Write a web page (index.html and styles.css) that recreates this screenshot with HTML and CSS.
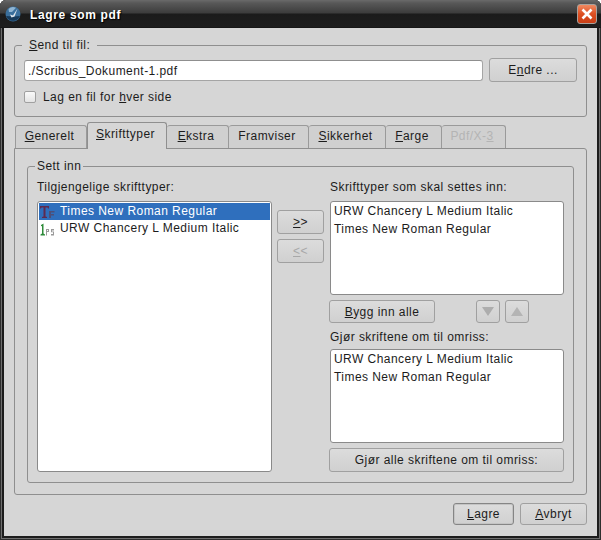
FILE: index.html
```html
<!DOCTYPE html>
<html lang="nb">
<head>
    <meta charset="UTF-8">
    <title>Lagre som pdf</title>
    <link rel="stylesheet" href="styles.css">
</head>
<body>
    <div class="window">
        <!-- tittellinje -->
        <div class="titlebar">
            <svg class="app-icon" width="16" height="16" viewBox="0 0 16 16">
                <circle cx="8" cy="8" r="7.5" fill="#3a6f9c"/>
                <path d="M1 10A7.5 7.5 0 0 0 15 10L9 10.5Z" fill="#173a5a"/>
                <path d="M3.5 3A6.5 6.5 0 0 1 11 1.8L7 6L4 6Z" fill="#8fb4d2"/>
                <path d="M12.5 2.5L8 9.5L5 8.5L6.5 11.5L9.5 10.5Z" fill="#dfe6ec"/>
            </svg>
            <span class="title">Lagre som pdf</span>
            <div class="close">
                <svg width="14" height="14" viewBox="0 0 14 14"><path d="M2.5 2.5L11.5 11.5M11.5 2.5L2.5 11.5" stroke="#fff" stroke-width="2.6"/></svg>
            </div>
        </div>

        <div class="body">
            <!-- fil -->
            <fieldset class="group file-group">
                <legend><u>S</u>end til fil:</legend>
                <div class="file-row">
                    <div class="input">./Scribus_Dokument-1.pdf</div>
                    <div class="btn btn-change">E<u>n</u>dre ...</div>
                </div>
                <div class="check-row">
                    <span class="checkbox"></span>
                    <span>Lag en fil for <u>h</u>ver side</span>
                </div>
            </fieldset>

            <!-- faner -->
            <div class="tabs">
                <div class="tab tab-1"><u>G</u>enerelt</div>
                <div class="tab tab-2 active"><u>S</u>krifttyper</div>
                <div class="tab tab-3"><u>E</u>kstra</div>
                <div class="tab tab-4">Framviser</div>
                <div class="tab tab-5"><u>S</u>ikkerhet</div>
                <div class="tab tab-6"><u>F</u>arge</div>
                <div class="tab tab-7 disabled">Pdf/X-<u>3</u></div>
            </div>

            <div class="panel">
                <fieldset class="group embed-group">
                    <legend>Sett inn</legend>
                    <div class="columns">
                        <div class="col-left">
                            <div class="label">Tilgjengelige skrifttyper:</div>
                            <div class="list list-fonts">
                                <div class="item selected">
                                    <svg class="font-icon" width="18" height="14" viewBox="0 0 18 14">
                                        <path d="M1 1H10V3.5H9L8.5 2.5H6.5V11.5L8 12V13H3V12L4.5 11.5V2.5H2.5L2 3.5H1Z" fill="#5e2a50"/>
                                        <path d="M10 6H15.5V7.5H12V9H15V10.5H12V13H10Z" fill="#4d4f78"/>
                                    </svg>
                                    <span>Times New Roman Regular</span>
                                </div>
                                <div class="item">
                                    <svg class="font-icon" width="18" height="14" viewBox="0 0 18 14">
                                        <path d="M2 3L4.5 1.5V11.5L6 12.5V13.5H1.5V12.5L3 11.5V4L2 4.2Z" fill="#2e8b3a"/>
                                        <path d="M7 7H10V10H8V13.5H7ZM8 8V9H9V8ZM15 7H12V10.3H14V12H12V13.5H15V9.5H13V8.5H15Z" fill="#9a9a9a"/>
                                    </svg>
                                    <span>URW Chancery L Medium Italic</span>
                                </div>
                            </div>
                        </div>

                        <div class="col-mid">
                            <div class="btn btn-move"><u>&gt;</u>&gt;</div>
                            <div class="btn btn-move disabled"><u>&lt;</u>&lt;</div>
                        </div>

                        <div class="col-right">
                            <div class="label">Skrifttyper som skal settes inn:</div>
                            <div class="list list-small">
                                <div class="item">URW Chancery L Medium Italic</div>
                                <div class="item">Times New Roman Regular</div>
                            </div>
                            <div class="btn-row">
                                <div class="btn btn-embed"><u>B</u>ygg inn alle</div>
                                <div class="arrows">
                                    <div class="btn btn-arrow"><span class="tri tri-down"></span></div>
                                    <div class="btn btn-arrow"><span class="tri tri-up"></span></div>
                                </div>
                            </div>
                            <div class="label label-outline">Gjør skriftene om til omriss:</div>
                            <div class="list list-small">
                                <div class="item">URW Chancery L Medium Italic</div>
                                <div class="item">Times New Roman Regular</div>
                            </div>
                            <div class="btn btn-wide">Gjør alle skriftene om til omriss:</div>
                        </div>
                    </div>
                </fieldset>
            </div>

            <div class="footer">
                <div class="btn btn-save default"><u>L</u>agre</div>
                <div class="btn btn-cancel"><u>A</u>vbryt</div>
            </div>
        </div>
    </div>
</body>
</html>
```
FILE: styles.css
```css
/* grunnstil */
html, body {
    margin: 0;
    padding: 0;
}

body {
    width: 601px;
    height: 540px;
    overflow: hidden;
    background-color: #fff;
    font-family: "Liberation Sans", Arial, sans-serif;
    font-size: 12px;
    letter-spacing: 0.45px;
    color: #1c1c1c;
}

u {
    text-underline-offset: 1px;
}

.window {
    width: 601px;
    height: 540px;
    box-sizing: border-box;
    display: flex;
    flex-direction: column;
    background-color: #1c1c1c;
    box-shadow: inset 0 0 0 1px #2e2e2e, inset 0 0 0 2px #6e6e6e;
    border-radius: 6px 6px 0 0;
    overflow: hidden;
}

/* tittellinje */
.titlebar {
    height: 28px;
    flex: none;
    display: flex;
    align-items: center;
    padding: 0 4px 0 5px;
    background: linear-gradient(#6a6a6a 0, #585858 3px, #3c3c3c 13px, #1b1b1b 14px, #1e1e1e 27px, #111 28px);
}

.app-icon {
    flex: none;
}

.title {
    margin: 2px 0 0 9px;
    flex: 1;
    color: #fff;
    font-weight: bold;
    font-size: 12px;
    letter-spacing: 0.65px;
    text-shadow: 1px 1px 1px #000;
}

.close {
    width: 20px;
    height: 20px;
    box-sizing: border-box;
    display: flex;
    align-items: center;
    justify-content: center;
    border: 1px solid #a8a19c;
    border-radius: 3px;
    background: linear-gradient(#f08a62, #dd4f22 50%, #c93f17);
}

.body {
    flex: 1;
    margin: 0 4px 4px;
    padding: 0 10px;
    background-color: #d6d6d6;
    display: flex;
    flex-direction: column;
    min-height: 0;
}

/* grupper */
.group {
    margin: 0;
    border: 1px solid #8f8f8f;
    border-radius: 3px;
    min-width: 0;
    box-sizing: border-box;
}

.group legend {
    line-height: 14px;
}

.file-group {
    margin-top: 10px;
    height: 79px;
    padding: 0 9px;
}

.file-group legend {
    margin-left: -2px;
    padding: 0 7px;
}

.file-row {
    display: flex;
    align-items: center;
    gap: 6px;
    margin-top: 6px;
}

.input {
    width: 459px;
    height: 21px;
    box-sizing: border-box;
    padding: 0 3px;
    line-height: 20px;
    background-color: #fff;
    border: 1px solid #a5a5a5;
    border-top-color: #8f8f8f;
    border-radius: 3px;
}

.check-row {
    display: flex;
    align-items: center;
    gap: 7px;
    margin-top: 8px;
}

.checkbox {
    width: 12px;
    height: 12px;
    box-sizing: border-box;
    background: linear-gradient(#fafafa, #e4e4e4);
    border: 1px solid #a0a0a0;
    border-radius: 2px;
}

/* knapper */
.btn {
    box-sizing: border-box;
    display: flex;
    align-items: center;
    justify-content: center;
    flex: none;
    background: linear-gradient(#dcdcdc, #d0d0d0);
    border: 1px solid #a0a0a0;
    border-radius: 3px;
}

.btn.disabled {
    color: #a8a8a8;
}

.btn-change {
    width: 88px;
    height: 24px;
}

.btn-move {
    width: 47px;
    height: 24px;
}

.btn-embed {
    width: 106px;
    height: 23px;
}

.btn-arrow {
    width: 24px;
    height: 23px;
}

.btn-wide {
    width: 235px;
    height: 24px;
    margin: 5px 0 0 -1px;
}

.btn-save {
    width: 61px;
    height: 22px;
}

.btn-cancel {
    width: 67px;
    height: 22px;
}

.btn.default {
    border: 1px solid #858585;
    box-shadow: inset 0 0 0 1px #c4c4c4;
}

.tri {
    width: 0;
    height: 0;
    border-left: 6px solid transparent;
    border-right: 6px solid transparent;
}

.tri-down {
    border-top: 9px solid #adadad;
}

.tri-up {
    border-bottom: 9px solid #b4b4b4;
}

/* faner */
.tabs {
    display: flex;
    align-items: flex-end;
    height: 26px;
    margin-top: 5px;
    padding-left: 1px;
    position: relative;
    z-index: 1;
}

.tab {
    box-sizing: border-box;
    height: 23px;
    display: flex;
    align-items: center;
    justify-content: center;
    padding: 0 3px 2px 0;
    background-color: #d0d0d0;
    border: 1px solid #9a9a9a;
    border-left: none;
    border-bottom: none;
    border-radius: 3px 3px 0 0;
}

.tab-1 {
    width: 72px;
    border-left: 1px solid #9a9a9a;
}

.tab-2 { width: 80px; }
.tab-3 { width: 62px; }
.tab-4 { width: 80px; }
.tab-5 { width: 77px; }
.tab-6 { width: 56px; }
.tab-7 { width: 64px; }

.tab.active {
    height: 27px;
    margin-bottom: -1px;
    padding-bottom: 5px;
    background-color: #d6d6d6;
    border-left: 1px solid #8f8f8f;
    border-color: #8f8f8f;
}

.tab.disabled {
    color: #b4b4b4;
}

.panel {
    width: 573px;
    height: 347px;
    box-sizing: border-box;
    padding: 10px 12px 11px;
    border: 1px solid #8f8f8f;
    border-radius: 0 3px 3px 3px;
}

.embed-group {
    height: 100%;
    padding: 0 9px;
}

.embed-group legend {
    margin-left: -2px;
    padding: 0 2px;
}

.columns {
    display: flex;
    margin-top: 7px;
}

.col-left {
    width: 235px;
    flex: none;
}

.col-mid {
    width: 47px;
    flex: none;
    margin: 30px 6px 0 5px;
    display: flex;
    flex-direction: column;
    gap: 5px;
}

.col-right {
    width: 234px;
    flex: none;
}

.label {
    height: 14px;
    line-height: 14px;
    margin-bottom: 7px;
}

.list {
    box-sizing: border-box;
    background-color: #fff;
    border: 1px solid #8a8a8a;
    border-radius: 3px;
    padding: 1px;
}

.list-fonts {
    height: 271px;
}

.list-fonts .item {
    height: 17px;
}

.list-small {
    height: 94px;
    padding: 0 3px;
}

.item {
    height: 18px;
    box-sizing: border-box;
    white-space: nowrap;
    display: flex;
    align-items: center;
}

.list-fonts .item span {
    margin-top: -1px;
}

.item.selected {
    background-color: #2f6fbd;
    color: #fff;
}

.font-icon {
    flex: none;
    margin-right: 3px;
}

.btn-row {
    display: flex;
    margin: 5px 0 0 -1px;
}

.arrows {
    display: flex;
    gap: 5px;
    margin-left: 41px;
}

.label-outline {
    margin-top: 7px;
    margin-bottom: 5px;
}

/* bunn */
.footer {
    display: flex;
    justify-content: flex-end;
    gap: 6px;
    margin-top: 8px;
}
```
